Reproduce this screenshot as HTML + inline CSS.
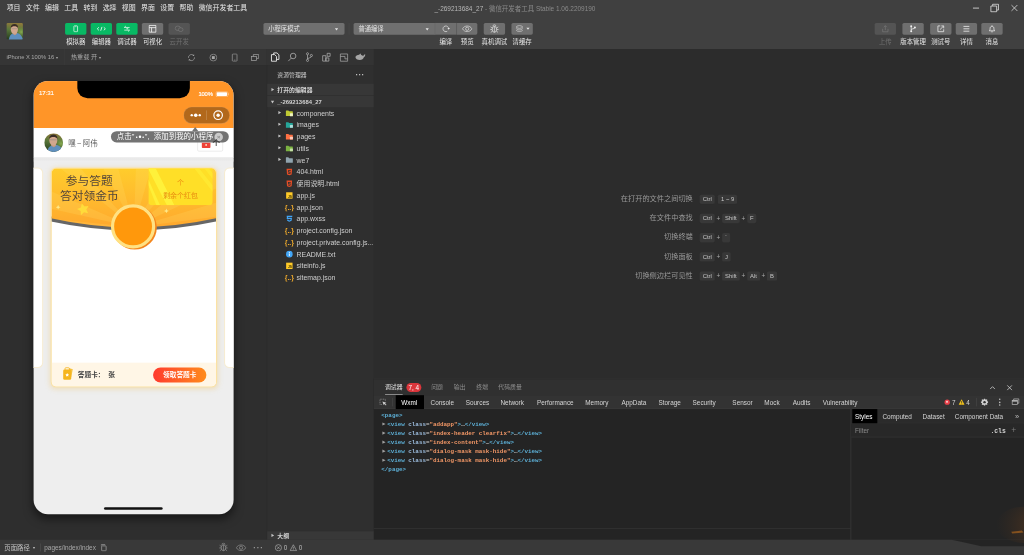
<!DOCTYPE html>
<html lang="zh-CN">
<head>
<meta charset="utf-8">
<title>微信开发者工具</title>
<style>
*{box-sizing:border-box;margin:0;padding:0}
html,body{width:1024px;height:555px;overflow:hidden;background:#2e2e2e}
body{font-family:"Liberation Sans","Noto Sans CJK SC",sans-serif;font-size:12px;color:#ccc}
#app{position:absolute;left:0;top:0;width:1920px;height:1041px;transform:scale(.533333);transform-origin:0 0;background:#2e2e2e;overflow:hidden}
.abs{position:absolute}
svg{display:block}
/* ---------- top bars ---------- */
#menubar{position:absolute;left:0;top:0;width:1920px;height:30px;background:#404040}
#menubar .mi{position:absolute;top:0;height:30px;line-height:29px;font-size:13px;color:#e8e8e8;white-space:nowrap}
#title{position:absolute;top:0;left:0;width:1920px;padding-left:11px;text-align:center;height:30px;line-height:33px;font-size:12.100px;color:#8a8a8a;white-space:nowrap}
#title b{font-weight:normal;color:#b8b8b8}
#toolbar{position:absolute;left:0;top:30px;width:1920px;height:62px;background:#404040}
.tb{position:absolute;top:13px;height:22px;width:40px;border-radius:3px;background:#6f6f6f}
.tb.g{background:#08b964}
.tb.d{background:#545454}
.tb svg{position:absolute;left:50%;top:50%;transform:translate(-50%,-50%)}
.tl{position:absolute;top:39.500px;height:18px;line-height:18px;font-size:12px;color:#e6e6e6;text-align:center;white-space:nowrap;transform:translateX(-50%)}
.tl.d{color:#6f6f6f}
.sel{position:absolute;top:13px;height:22px;border-radius:3px;background:#707070;color:#e2e2e2;font-size:11.800px;line-height:25px;padding-left:9px;white-space:nowrap;overflow:hidden}
.sel i{position:absolute;right:12px;top:9.500px;border:3.5px solid transparent;border-top:4.5px solid #e6e6e6;border-bottom:0}
/* ---------- sim toolbar ---------- */
#simbar{position:absolute;left:0;top:92px;width:500px;height:30px;background:#353535}
#simbar .t{position:absolute;top:0;height:30px;line-height:30px;font-size:11.5px;color:#a9a9a9;white-space:nowrap}
#expbar{position:absolute;left:500px;top:92px;width:201px;height:30px;background:#333}
#sim{position:absolute;left:0;top:122px;width:501px;height:890px;background:#2e2e2e}
#explorer{position:absolute;left:500px;top:122px;width:201px;height:890px;background:#2f2f2f;border-left:1px solid #2a2a2a}
#editor{position:absolute;left:701px;top:92px;width:1219px;height:618px;background:#2c2c2c}
#debug{position:absolute;left:701px;top:710px;width:1219px;height:302px;background:#242424}
#status{position:absolute;left:0;top:1012px;width:1920px;height:29px;background:#393939}

/* ---------- explorer ---------- */
#explorer .hd{position:absolute;left:0;top:0;width:200px;height:35px;line-height:38px;font-size:11px;color:#c8c8c8;padding-left:19px}
#explorer .sec{position:absolute;left:0;width:200px;height:22px;line-height:23.500px;font-size:11px;font-weight:bold;color:#d2d2d2;padding-left:19px;white-space:nowrap}
#explorer .row{position:absolute;left:0;width:200px;height:22px;line-height:24.500px;font-size:13px;color:#cfcfcf;padding-left:55px;white-space:nowrap;overflow:hidden}
#explorer .row svg{position:absolute;left:34px;top:3.500px;width:15px;height:15px}#explorer .row svg.j{width:19px;left:32px}
#explorer .tw{position:absolute;left:21px;top:7px;border:3.5px solid transparent;border-left:5px solid #c5c5c5;border-right:0}
#explorer .sec .tw{left:8px;top:7.5px}
#explorer .sec .tw.o{border:3.5px solid transparent;border-top:5px solid #c5c5c5;border-bottom:0;top:9px;left:6.5px}

/* ---------- editor watermark ---------- */
#editor .wl{position:absolute;right:621px;height:36px;line-height:36px;font-size:13.5px;color:#9a9a9a;white-space:nowrap;letter-spacing:0}
#editor .wk{position:absolute;left:609.500px;height:36px;line-height:36px;font-size:11px;color:#8c8c8c;white-space:nowrap}
#editor kbd{display:inline-block;font-family:inherit;font-size:11px;line-height:17px;height:18px;padding:0 5.600px;margin:0 1.500px;background:#383838;border-radius:3px;color:#c6c6c6;vertical-align:middle;border-bottom:1px solid #303030}
#editor .pl{display:inline-block;width:10.500px;text-align:center;color:#aaa;font-size:12px;vertical-align:middle}
/* ---------- debug ---------- */
#debug{border-top:1px solid #3a3a3a}
#dtop{position:absolute;left:0;top:0;width:1219px;height:30px;background:#303030}
#dtop .t{position:absolute;top:0;height:30px;line-height:31px;font-size:11px;color:#8e8e8e;white-space:nowrap}
#dtabs{position:absolute;left:0;top:30px;width:1219px;height:26px;background:#333;border-bottom:1px solid #3d3d3d}
#dtabs .t{position:absolute;top:0;height:25px;line-height:29px;font-size:12px;color:#d6d6d6;white-space:nowrap}
#wxml{position:absolute;left:0;top:56px;width:894px;font-family:"Liberation Mono",monospace;font-size:11px;line-height:17px;color:#5db0d7;white-space:pre;font-weight:bold}
#wxml div{height:17px;padding-left:25px;position:relative}
#wxml i{position:absolute;left:15.500px;top:4px;border:3.600px solid transparent;border-left:6px solid #a0a0a0;border-right:0}
#wxml .a{color:#9bbbdc}#wxml .v{color:#f29766}#wxml .e{color:#cfcfcf}
#styles{position:absolute;left:894px;top:56px;width:325px;height:245px;border-left:1px solid #444}
#styles .tabs{position:absolute;left:0;top:0;width:324px;height:27px;background:#2b2b2b;border-bottom:1px solid #3a3a3a}
#styles .tabs .t{position:absolute;top:0;height:26px;line-height:28.500px;font-size:12px;color:#d6d6d6;white-space:nowrap}
#styles .flt{position:absolute;left:0;top:27px;width:324px;height:26px;background:#282828;border-bottom:1px solid #3a3a3a}
/* ---------- status ---------- */
#status .t{position:absolute;top:0;height:29px;line-height:31px;font-size:12px;color:#a8a8a8;white-space:nowrap}

/* ---------- phone ---------- */
#phone{position:absolute;left:63px;top:30px;width:375px;height:812px;border-radius:27px;background:#eee;overflow:hidden;box-shadow:0 8px 18px rgba(0,0,0,.5);color:#333}
#phone .nav{position:absolute;left:0;top:0;width:375px;height:88px;background:#ff9528}
#phone .notch{position:absolute;left:82px;top:-2px;width:211px;height:34px;background:#000;border-radius:0 0 19px 19px}
#phone .hdr{position:absolute;left:0;top:88px;width:375px;height:56px;background:#fff;border-bottom:1px solid #e2e2e2}
#card{position:absolute;left:32px;top:162px;width:312px;height:412px;border-radius:10px;background:#fff;border:2px solid #fbe2a4;overflow:hidden;box-shadow:0 2px 10px rgba(240,190,80,.35)}
</style>
</head>
<body>
<div id="app">
<div id="menubar"><div class="mi" style="left:12.5px">项目</div><div class="mi" style="left:48.5px">文件</div><div class="mi" style="left:84.5px">编辑</div><div class="mi" style="left:120.5px">工具</div><div class="mi" style="left:156.5px">转到</div><div class="mi" style="left:192.5px">选择</div><div class="mi" style="left:228.5px">视图</div><div class="mi" style="left:264.5px">界面</div><div class="mi" style="left:300.5px">设置</div><div class="mi" style="left:336.5px">帮助</div><div class="mi" style="left:372.5px">微信开发者工具</div><svg class="abs" style="left:1824px;top:9px" width="12" height="12" viewBox="0 0 12 12"><path d="M0 6.200h12" stroke="#dcdcdc" stroke-width="1.600" fill="none"/></svg>
<svg class="abs" style="left:1856px;top:5.500px" width="18" height="18" viewBox="0 0 16 16"><path d="M1.7 4.700h9.600v9.600h-9.600z M4.600 4.400v-2.700h9.700v9.700h-2.700" stroke="#dcdcdc" stroke-width="1.400" fill="none"/></svg>
<svg class="abs" style="left:1895px;top:8px" width="14" height="14" viewBox="0 0 14 14"><path d="M1.500 1.500l11 11M12.500 1.500l-11 11" stroke="#dcdcdc" stroke-width="1.500" fill="none"/></svg></div>
<div id="title"><b>_-269213684_27</b> - 微信开发者工具 Stable 1.06.2209190</div>
<div id="toolbar"><svg class="abs" style="left:11.500px;top:12.500px;border-radius:2.500px" width="31" height="31" viewBox="0 0 31 31" preserveAspectRatio="none"><defs><linearGradient id="ta" x1=".2" y1="0" x2=".1" y2="1"><stop offset="0" stop-color="#8c7a3c"/><stop offset=".4" stop-color="#58763a"/><stop offset="1" stop-color="#263c1e"/></linearGradient><radialGradient id="tb" cx=".9" cy=".55" r=".35"><stop offset="0" stop-color="#86aa50"/><stop offset="1" stop-color="#66883c" stop-opacity="0"/></radialGradient><filter id="tf" x="-10%" y="-10%" width="120%" height="120%"><feGaussianBlur stdDeviation=".7"/></filter></defs><rect width="31" height="31" fill="url(#ta)"/><rect width="31" height="31" fill="url(#tb)"/><g filter="url(#tf)"><path d="M4.500 32C5.500 25 8 21.500 12 20l4 1.500 4.500-2.500c5 1.500 9 5 11 13z" fill="#5f8fbd"/><path d="M11.500 16h7l1.500 4-4 3-4.500-2.500z" fill="#c79c84"/><ellipse cx="15" cy="11.800" rx="6.600" ry="8.600" fill="#d2a78e"/><path d="M8.200 9.500C8 4.500 11 2 15.200 2s7 2.500 6.600 7.500C20.500 6.800 18 6 15 6S9.600 6.800 8.200 9.500z" fill="#3a2e26"/><path d="M9.500 10.800h11" stroke="#8a8a8a" stroke-width=".9"/></g></svg><div class="tb g" style="left:122px"><svg width="12" height="14" viewBox="0 0 14 16"><rect x="3" y="1.500" width="8" height="13" rx="1.500" fill="none" stroke="#fff" stroke-width="1.500"/><path d="M5.7 3.4h2.600" stroke="#fff" stroke-width="1"/></svg></div><div class="tl " style="left:142px">模拟器</div><div class="tb g" style="left:170px"><svg width="20" height="12" viewBox="0 0 20 12"><path d="M5.400 3.200L2.400 6l3 2.800M14.600 3.200L17.600 6l-3 2.800M11.200 2.400L8.800 9.600" fill="none" stroke="#fff" stroke-width="1.500"/></svg></div><div class="tl " style="left:190px">编辑器</div><div class="tb g" style="left:218px"><svg width="16" height="14" viewBox="0 0 16 14"><path d="M3 4.5h10M6 1.8L3 4.5M13 9.5H3M10 12.2l3-2.7" fill="none" stroke="#fff" stroke-width="1.3"/><rect x="7" y="6.2" width="3.4" height="1.6" fill="#fff"/></svg></div><div class="tl " style="left:238px">调试器</div><div class="tb " style="left:266px"><svg width="16" height="16" viewBox="0 0 16 16"><path d="M1.7 1.7h12.6v12.6H1.7zM1.7 5.8h12.6M6.2 5.8v8.5" fill="none" stroke="#fff" stroke-width="1.4"/></svg></div><div class="tl " style="left:286px">可视化</div><div class="tb d" style="left:316px"><svg width="20" height="14" viewBox="0 0 20 14"><ellipse cx="7.5" cy="6" rx="5" ry="4.2" fill="none" stroke="#7a7a7a" stroke-width="1.2"/><ellipse cx="12.8" cy="8.6" rx="4.4" ry="3.6" fill="#545454" stroke="#7a7a7a" stroke-width="1.2"/></svg></div><div class="tl d" style="left:336px">云开发</div><div class="sel" style="left:494px;width:152px">小程序模式<i></i></div><div class="abs" style="left:654px;top:13px;width:1px;height:22px;background:#4b4b4b"></div><div class="sel" style="left:663px;width:153px;border-radius:3px 0 0 3px">普通编译<i></i></div><div class="tb" style="left:815px;width:41px;border-radius:0;border-left:1px solid #666"><svg width="16" height="16" viewBox="0 0 16 16"><path d="M10.600 12.600A5.300 5.300 0 1 1 13.200 7.600" fill="none" stroke="#e8e8e8" stroke-width="1.300"/><path d="M11 6.400h4.600l-2.300 3.200z" fill="#e8e8e8"/></svg></div><div class="tl" style="left:836px">编译</div><div class="tb" style="left:856px;width:39px;border-radius:0 3px 3px 0;border-left:1px solid #666"><svg width="20" height="14" viewBox="0 0 20 14"><path d="M1.2 7C3.2 3.4 6.3 1.8 10 1.8S16.8 3.4 18.8 7C16.8 10.6 13.7 12.2 10 12.2S3.2 10.6 1.2 7z" fill="none" stroke="#e8e8e8" stroke-width="1.2"/><circle cx="10" cy="7" r="3" fill="none" stroke="#e8e8e8" stroke-width="1.2"/></svg></div><div class="tl" style="left:876px">预览</div><div class="tb " style="left:907px"><svg width="20" height="18" viewBox="0 0 20 18"><ellipse cx="10" cy="10" rx="4.2" ry="5.6" fill="none" stroke="#e8e8e8" stroke-width="1.3"/><path d="M10 4.4v11.2M7.2 4.2a2.8 2.8 0 0 1 5.6 0M5.8 7.6L2.8 5.4M14.2 7.6l3-2.2M5.8 10.4H2.2M14.2 10.4h3.6M6.2 13.4l-3 2.4M13.8 13.4l3 2.4" fill="none" stroke="#e8e8e8" stroke-width="1.2"/></svg></div><div class="tl " style="left:927px">真机调试</div><div class="tb" style="left:959px"><svg style="margin-left:-5px" width="16" height="14.500" viewBox="0 0 18 16"><ellipse cx="9" cy="4.2" rx="6.6" ry="2.8" fill="none" stroke="#e8e8e8" stroke-width="1.2"/><path d="M2.4 7.4c0 1.6 3 2.8 6.6 2.8s6.6-1.2 6.6-2.8M2.4 10.8c0 1.6 3 2.8 6.6 2.8s6.6-1.2 6.6-2.8" fill="none" stroke="#e8e8e8" stroke-width="1.2"/></svg><i style="position:absolute;right:6.500px;top:9px;border:3.500px solid transparent;border-top:4.5px solid #e6e6e6;border-bottom:0"></i></div><div class="tl" style="left:979px">清缓存</div><div class="tb d" style="left:1640px"><svg width="16" height="16" viewBox="0 0 16 16"><path d="M8 10.5V2.2M5 5l3-3 3 3M3 8v5.6h10V8" fill="none" stroke="#7a7a7a" stroke-width="1.2"/></svg></div><div class="tl d" style="left:1660px">上传</div><div class="tb " style="left:1692px"><svg width="16" height="16" viewBox="0 0 16 16"><path d="M4.5 4.6v7M4.5 10c0-2.6 6.6-1.4 6.6-4" fill="none" stroke="#f0f0f0" stroke-width="1.4"/><circle cx="4.5" cy="3.2" r="1.9" fill="#f0f0f0"/><circle cx="4.5" cy="12.8" r="1.9" fill="#f0f0f0"/><circle cx="11.4" cy="5.6" r="1.9" fill="#f0f0f0"/></svg></div><div class="tl " style="left:1712px">版本管理</div><div class="tb " style="left:1744px"><svg width="16" height="16" viewBox="0 0 16 16"><path d="M7 2.6H2.6v10.8h10.8V9" fill="none" stroke="#f0f0f0" stroke-width="1.4"/><path d="M6.6 9.4l6.2-6.2M9 2.6h4.4V7" fill="none" stroke="#f0f0f0" stroke-width="1.4"/></svg></div><div class="tl " style="left:1764px">测试号</div><div class="tb " style="left:1792px"><svg width="16" height="16" viewBox="0 0 16 16"><path d="M2.5 3.5h11M2.5 8h11M2.5 12.5h11" stroke="#f0f0f0" stroke-width="1.5"/></svg></div><div class="tl " style="left:1812px">详情</div><div class="tb " style="left:1840px"><svg width="16" height="16" viewBox="0 0 16 16"><path d="M3 11.8h10c-1.2-1-1.4-2-1.4-4.4 0-2.4-1.4-4-3.6-4s-3.6 1.6-3.6 4c0 2.4-.2 3.4-1.4 4.4z" fill="none" stroke="#f0f0f0" stroke-width="1.4" stroke-linejoin="round"/><path d="M6.6 13.6h2.8" stroke="#f0f0f0" stroke-width="1.4"/><path d="M8 1.6v1.6" stroke="#f0f0f0" stroke-width="1.4"/></svg></div><div class="tl " style="left:1860px">消息</div></div>
<div id="simbar"><div class="t" style="left:12px;font-size:10.800px">iPhone X 100% 16 <span style="font-size:8px;position:relative;top:-1px">▾</span></div><div class="abs" style="left:120px;top:0;width:1px;height:30px;background:#3c3c3c"></div><div class="t" style="left:133px">热重载 开 <span style="font-size:8px;position:relative;top:-1px">▾</span></div><svg class="abs" style="left:351px;top:8px" width="16" height="16" viewBox="0 0 16 16"><path d="M2.300 8.600A5.800 5.800 0 0 1 12 3.700M13.700 7.400A5.800 5.800 0 0 1 4 12.300" fill="none" stroke="#a8a8a8" stroke-width="1.200"/><path d="M13 1.600v3.200H9.800zM3 14.400v-3.200h3.200z" fill="#a8a8a8"/></svg><svg class="abs" style="left:392px;top:8px" width="16" height="16" viewBox="0 0 16 16"><circle cx="8" cy="8" r="6.4" fill="none" stroke="#a8a8a8" stroke-width="1.2"/><rect x="5.3" y="5.3" width="5.4" height="5.4" fill="#a8a8a8"/></svg><svg class="abs" style="left:432px;top:8px" width="16" height="16" viewBox="0 0 16 16"><rect x="3.6" y="1.2" width="8.8" height="13.6" rx="1.4" fill="none" stroke="#a8a8a8" stroke-width="1.2"/><path d="M6.6 12.6h2.8" stroke="#a8a8a8" stroke-width="1"/></svg><svg class="abs" style="left:470px;top:8px" width="16" height="16" viewBox="0 0 16 16"><path d="M5 6V2.300h10v7.200h-3.600" fill="none" stroke="#a8a8a8" stroke-width="1.300"/><rect x="1.200" y="6.200" width="10" height="7.400" fill="none" stroke="#a8a8a8" stroke-width="1.300"/></svg></div>
<div id="expbar"><svg class="abs" style="left:6px;top:5px" width="20" height="20" viewBox="0 0 20 20"><path d="M7.2 5.2V2.2h6.2l3.6 3.6v8.6h-4" fill="none" stroke="#fff" stroke-width="1.5"/><path d="M3 5.4h6l3.4 3.4v9H3z" fill="none" stroke="#fff" stroke-width="1.5"/></svg><svg class="abs" style="left:38px;top:5px" width="20" height="20" viewBox="0 0 20 20"><circle cx="11.6" cy="8" r="5.2" fill="none" stroke="#b8b8b8" stroke-width="1.4"/><path d="M8 12L2.6 17.6" stroke="#b8b8b8" stroke-width="1.4"/></svg><svg class="abs" style="left:70px;top:5px" width="20" height="20" viewBox="0 0 20 20"><circle cx="6.6" cy="3.8" r="2" fill="none" stroke="#b8b8b8" stroke-width="1.3"/><circle cx="6.6" cy="16.2" r="2" fill="none" stroke="#b8b8b8" stroke-width="1.3"/><circle cx="13.8" cy="7" r="2" fill="none" stroke="#b8b8b8" stroke-width="1.3"/><path d="M6.6 5.8v8.4M13.8 9c0 3-7.2 2-7.2 5" fill="none" stroke="#b8b8b8" stroke-width="1.3"/></svg><svg class="abs" style="left:102px;top:5px" width="20" height="20" viewBox="0 0 20 20"><path d="M3 7.4h6v10.2H3zM9 11.6h5.6v6H9zM11.4 3h5.6v5.6h-5.6z" fill="none" stroke="#b8b8b8" stroke-width="1.3"/></svg><svg class="abs" style="left:136px;top:6.500px" width="18" height="18" viewBox="0 0 18 18"><path d="M2.200 2.200h13.600v13.600H2.200zM2.200 6.800h8.600v4.600h5" fill="none" stroke="#a6a6a6" stroke-width="1.400"/></svg><svg class="abs" style="left:165px;top:6px" width="22" height="18" viewBox="0 0 22 18"><path d="M1.500 9.500C1.500 6.200 5 4.600 8.600 4.600c.3-1.300 1.300-2.200 2.500-2.400.1 1 .5 1.900 1.200 2.700 1.700.5 3 1.400 3.800 2.500.400-1.800 1.600-3.200 3.600-3.600.4 2.400-.5 4.400-2.500 5.600-.6 3-3.600 5-7.600 5-4.600 0-8.100-1.800-8.100-4.900z" fill="#a6a6a6"/></svg></div>
<div id="sim"><div id="phone"><div class="nav"></div><div class="notch"></div><div class="abs" style="left:10px;top:14px;font-size:11.500px;line-height:18px;color:#fff;letter-spacing:-.2px;-webkit-text-stroke:.2px #fff">17:31</div><div class="abs" style="left:309px;top:15px;font-size:11px;line-height:18px;color:#fff;letter-spacing:-.3px;-webkit-text-stroke:.3px #fff">100%</div><svg class="abs" style="left:341px;top:19px" width="27" height="11" viewBox="0 0 27 11"><rect x=".6" y=".6" width="22.800" height="9.800" rx="2.600" fill="none" stroke="#fff" stroke-opacity=".6" stroke-width="1"/><rect x="2.200" y="2.200" width="19.600" height="6.600" rx="1.400" fill="#fff"/><path d="M24.600 3.800c1.200.3 1.200 3.100 0 3.400z" fill="#fff" fill-opacity=".7"/></svg><div class="abs" style="left:281px;top:48px;width:87px;height:32px;border-radius:16px;background:rgba(0,0,0,.3);border:1px solid rgba(255,255,255,.18)"></div><div class="abs" style="left:324px;top:55px;width:1px;height:18px;background:rgba(255,255,255,.3)"></div><svg class="abs" style="left:293px;top:58px" width="22" height="12" viewBox="0 0 22 12"><circle cx="3.500" cy="6" r="2.200" fill="#fff"/><circle cx="11" cy="6" r="3.400" fill="#fff"/><circle cx="18.500" cy="6" r="2.200" fill="#fff"/></svg><svg class="abs" style="left:336px;top:54px" width="20" height="20" viewBox="0 0 20 20"><circle cx="10" cy="10" r="8" fill="none" stroke="#fff" stroke-width="2.200"/><circle cx="10" cy="10" r="3.200" fill="#fff"/></svg><div class="hdr"></div><svg class="abs" style="left:20px;top:98px;border-radius:18px" width="35" height="35" viewBox="0 0 31 31" preserveAspectRatio="none"><defs><linearGradient id="pa" x1=".2" y1="0" x2=".1" y2="1"><stop offset="0" stop-color="#8c7a3c"/><stop offset=".4" stop-color="#58763a"/><stop offset="1" stop-color="#263c1e"/></linearGradient><radialGradient id="pb" cx=".9" cy=".55" r=".35"><stop offset="0" stop-color="#86aa50"/><stop offset="1" stop-color="#66883c" stop-opacity="0"/></radialGradient><filter id="pf" x="-10%" y="-10%" width="120%" height="120%"><feGaussianBlur stdDeviation=".7"/></filter></defs><rect width="31" height="31" fill="url(#pa)"/><rect width="31" height="31" fill="url(#pb)"/><g filter="url(#pf)"><path d="M4.500 32C5.500 25 8 21.500 12 20l4 1.500 4.500-2.500c5 1.500 9 5 11 13z" fill="#5f8fbd"/><path d="M11.500 16h7l1.500 4-4 3-4.500-2.500z" fill="#c79c84"/><ellipse cx="15" cy="11.800" rx="6.600" ry="8.600" fill="#d2a78e"/><path d="M8.200 9.500C8 4.500 11 2 15.200 2s7 2.500 6.600 7.500C20.500 6.800 18 6 15 6S9.600 6.800 8.200 9.500z" fill="#3a2e26"/><path d="M9.500 10.800h11" stroke="#8a8a8a" stroke-width=".9"/></g></svg><div class="abs" style="left:65px;top:106px;font-size:14px;line-height:20px;color:#555">嘿<span style="margin:0 2.500px">~</span>阿伟</div><div class="abs" style="left:307px;top:96px;width:48px;height:36px;border:1px solid #ddd;border-radius:3px;background:#fff"></div><div class="abs" style="left:297px;top:86px;border:6px solid transparent;border-bottom:8px solid #757575;border-top:0"></div><div class="abs" style="left:145px;top:94px;width:221px;height:20.500px;border-radius:10.500px;background:#737373;color:#fff;font-size:14px;line-height:20.500px;padding-left:11px;white-space:nowrap">点击"<span style="font-size:10px;letter-spacing:1.500px;vertical-align:1px;margin:0 0 0 2.500px">•<span style="font-size:16px;vertical-align:-2.200px">•</span>•</span>",&nbsp; 添加到我的小程序</div><div class="abs" style="left:339px;top:97px;width:16px;height:16px;border-radius:8px;background:#c9c9c9;color:#8a8a8a;font-size:11px;line-height:16px;text-align:center;font-weight:bold">×</div><div class="abs" style="left:0;top:145px;width:375px;height:6px;background:linear-gradient(#e6e6e6,#eee)"></div><svg class="abs" style="left:314.500px;top:114.500px" width="17" height="11" viewBox="0 0 17 11"><path d="M0 0h17v8.500a2 2 0 0 1-2 2H2a2 2 0 0 1-2-2z" fill="#ee4238"/><circle cx="8.500" cy="4.800" r="1.700" fill="#ffe9c8"/></svg><div class="abs" style="left:335.500px;top:107px;font-size:14px;line-height:18px;color:#333;-webkit-text-stroke:.3px #333">个</div><div class="abs" style="left:-20px;top:162px;width:38px;height:376px;border-radius:10px;background:#fff;border:2px solid #f6ecd2"></div><div class="abs" style="left:357px;top:162px;width:38px;height:376px;border-radius:10px;background:#fff;border:2px solid #f6ecd2"></div><div id="card"><svg class="abs" style="left:-2px;top:-2px" width="312" height="130" viewBox="0 0 312 130">
<defs>
<linearGradient id="cg" x1="0" y1="0" x2="0" y2="1"><stop offset="0" stop-color="#ffcd2c"/><stop offset=".5" stop-color="#ffb82e"/><stop offset="1" stop-color="#ffa22e"/></linearGradient>
<radialGradient id="rg" cx=".5" cy="1" r=".9"><stop offset="0" stop-color="#fff" stop-opacity=".0"/><stop offset="1" stop-color="#fff" stop-opacity="0"/></radialGradient>
<clipPath id="cc"><path d="M0 0H312V95Q156 130 0 95z"/></clipPath>
</defs>
<path d="M0 101Q156 135 312 101V92H0z" fill="#666"/>
<g clip-path="url(#cc)">
<rect width="312" height="130" fill="url(#cg)"/>
<g fill="#ffe070" fill-opacity=".2">
<path d="M156 112L-10 40V75z"/><path d="M156 112L10 -5H50z"/><path d="M156 112L95 -5H125z"/><path d="M156 112L160 -5H190z"/><path d="M156 112L225 -5H262z"/><path d="M156 112L300 -5L330 30z"/><path d="M156 112L330 60V90z"/><path d="M156 112L-10 95V112z"/>
</g>
</g>
<path d="M0 -11l3.400 7 7.700 1-5.600 5.300 1.400 7.700L0 6.300l-6.900 3.700 1.400-7.700L-11.100 -3l7.700-1z" fill="#ffdc3a" transform="translate(61 78) rotate(-14)"/>
<path d="M14 70l1.300 3.200 3.200 1.300-3.200 1.300L14 79l-1.300-3.200-3.200-1.300 3.200-1.300z" fill="#ffe98a"/>
<path d="M217 77l1.300 3.200 3.200 1.300-3.200 1.300L217 86l-1.300-3.200-3.200-1.300 3.200-1.300z" fill="#ffe98a"/>
</svg><div class="abs" style="left:0;top:8px;width:141px;text-align:center;font-size:22px;line-height:30px;color:#54463a;letter-spacing:0">参与答题</div><div class="abs" style="left:0;top:37px;width:141px;text-align:center;font-size:22px;line-height:30px;color:#54463a;white-space:nowrap;padding-left:0">答对领金币</div><svg class="abs" style="left:181px;top:-2px" width="121" height="73" viewBox="0 0 121 73"><defs><clipPath id="tk"><path d="M0 0H121V64a7 7 0 0 1-7 7H7a7 7 0 0 1-7-7z"/></clipPath></defs><g clip-path="url(#tk)"><rect width="121" height="73" fill="#ffdf27"/><path d="M0 0H13L50 73H36L0 3z" fill="#fff53e" fill-opacity=".85"/><path d="M0 22V33L16 73H23z" fill="#fff53e" fill-opacity=".7"/><path d="M85 0H94L121 34V46z" fill="#fff23a" fill-opacity=".5"/><path d="M104 0H112L121 11V22z" fill="#fff23a" fill-opacity=".4"/></g></svg><div class="abs" style="left:181px;top:17px;width:121px;text-align:center;font-size:13px;line-height:18px;color:#ee8f12">个</div><div class="abs" style="left:181px;top:42px;width:121px;text-align:center;font-size:13px;line-height:18px;color:#e88a10">剩余个红包</div><div class="abs" style="left:113.500px;top:69px;width:83px;height:83px;border-radius:42px;background:#f4861c"></div><div class="abs" style="left:111px;top:66.500px;width:83px;height:83px;border-radius:42px;background:#ff980c;border:6px solid #ffe183"></div><div class="abs" style="left:0;top:364px;width:312px;height:46px;background:#fff6e6"></div><svg class="abs" style="left:20px;top:372px" width="22" height="26" viewBox="0 0 22 26"><path d="M12 2l7.500 2.500-3 16z" fill="#f6c443"/><rect x="1.500" y="5" width="15" height="19" rx="2.500" fill="#f5b51e"/><rect x="5" y="1.500" width="8" height="5" rx="1.500" fill="none" stroke="#f5b51e" stroke-width="1.500"/><path d="M9 11.500l1.200 2 2.200.5-1.500 1.700.2 2.300-2.100-.9-2.100.9.200-2.300-1.500-1.700 2.200-.5z" fill="#fff"/></svg><div class="abs" style="left:49px;top:377px;font-size:12.500px;line-height:20px;color:#444;font-weight:bold;white-space:pre">答题卡：  张</div><div class="abs" style="left:190px;top:373px;width:100px;height:28px;border-radius:14px;background:linear-gradient(90deg,#ff3a2e,#ff8c1c);color:#fff;font-size:12.500px;font-weight:bold;line-height:28px;text-align:center">领取答题卡</div></div><div class="abs" style="left:132px;top:799px;width:110px;height:5px;border-radius:3px;background:#111"></div></div></div>
<div id="explorer"><div class="hd">资源管理器<span style="position:absolute;left:165.500px;top:-2.300px;font-size:15px;font-weight:bold;letter-spacing:.6px;color:#c4c4c4">···</span></div><div class="sec" style="top:35px;background:#373737"><i class="tw"></i>打开的编辑器</div><div class="sec" style="top:57px;background:#373737;border-top:1px solid #2d2d2d"><i class="tw o"></i>_-269213684_27</div><div class="row" style="top:79px"><i class="tw"></i><svg width="16" height="16" viewBox="0 0 16 16"><path d="M1 3.200a1 1 0 0 1 1-1h4l1.600 1.600H14a1 1 0 0 1 1 1v7.400a1 1 0 0 1-1 1H2a1 1 0 0 1-1-1z" fill="#c0ca33"/><rect x="9.200" y="8" width="6" height="5.600" rx="1" fill="#f0f4c3"/></svg>components</div><div class="row" style="top:101px"><i class="tw"></i><svg width="16" height="16" viewBox="0 0 16 16"><path d="M1 3.200a1 1 0 0 1 1-1h4l1.600 1.600H14a1 1 0 0 1 1 1v7.400a1 1 0 0 1-1 1H2a1 1 0 0 1-1-1z" fill="#26a69a"/><rect x="9.200" y="8" width="6" height="5.600" rx="1" fill="#b2dfdb"/></svg>images</div><div class="row" style="top:123px"><i class="tw"></i><svg width="16" height="16" viewBox="0 0 16 16"><path d="M1 3.200a1 1 0 0 1 1-1h4l1.600 1.600H14a1 1 0 0 1 1 1v7.400a1 1 0 0 1-1 1H2a1 1 0 0 1-1-1z" fill="#ff7043"/><rect x="9.200" y="8" width="6" height="5.600" rx="1" fill="#ffccbc"/></svg>pages</div><div class="row" style="top:145px"><i class="tw"></i><svg width="16" height="16" viewBox="0 0 16 16"><path d="M1 3.200a1 1 0 0 1 1-1h4l1.600 1.600H14a1 1 0 0 1 1 1v7.400a1 1 0 0 1-1 1H2a1 1 0 0 1-1-1z" fill="#7cb342"/><rect x="9.200" y="8" width="6" height="5.600" rx="1" fill="#c5e1a5"/></svg>utils</div><div class="row" style="top:167px"><i class="tw"></i><svg width="16" height="16" viewBox="0 0 16 16"><path d="M1 3.200a1 1 0 0 1 1-1h4l1.600 1.600H14a1 1 0 0 1 1 1v7.400a1 1 0 0 1-1 1H2a1 1 0 0 1-1-1z" fill="#90a4ae"/></svg>we7</div><div class="row" style="top:189px"><svg width="16" height="16" viewBox="0 0 16 16"><path d="M2.400 1.600h11.200l-1 11.400L8 14.600 3.400 13z" fill="#e44d26"/><path d="M5.200 4.400h5.800l-.2 1.600H6.800l.1 1.500h3.700l-.4 4L8 12.100l-2.200-.6-.1-1.700h1.500l.1.700.7.200.8-.2.1-1.400H5.600z" fill="#2e2e2e"/></svg>404.html</div><div class="row" style="top:211px"><svg width="16" height="16" viewBox="0 0 16 16"><path d="M2.400 1.600h11.200l-1 11.400L8 14.600 3.400 13z" fill="#e44d26"/><path d="M5.200 4.400h5.800l-.2 1.600H6.800l.1 1.500h3.700l-.4 4L8 12.100l-2.200-.6-.1-1.700h1.500l.1.700.7.200.8-.2.1-1.400H5.600z" fill="#2e2e2e"/></svg>使用说明.html</div><div class="row" style="top:233px"><svg width="16" height="16" viewBox="0 0 16 16"><rect x="1.600" y="1.600" width="12.800" height="12.800" fill="#ffca28"/><text x="13.400" y="13.200" font-family="Liberation Sans,sans-serif" font-size="6.500" font-weight="bold" text-anchor="end" fill="#3a3000">JS</text></svg>app.js</div><div class="row" style="top:255px"><svg class="j" width="20" height="16" viewBox="0 0 20 16"><text x="10" y="12.800" font-family="Liberation Sans,sans-serif" font-size="14" font-weight="bold" text-anchor="middle" fill="#f2ac2c">{..}</text></svg>app.json</div><div class="row" style="top:277px"><svg width="16" height="16" viewBox="0 0 16 16"><path d="M2.600 1.800h11.600l-.5 2.400H5.600l-.3 1.600h8.100l-.9 5.800-4.700 1.800-4.200-1.800.3-2.400h2.200l-.1 1 2 .8 2.300-.8.3-2H2.600l.5-2.400z" fill="#42a5f5"/></svg>app.wxss</div><div class="row" style="top:299px"><svg class="j" width="20" height="16" viewBox="0 0 20 16"><text x="10" y="12.800" font-family="Liberation Sans,sans-serif" font-size="14" font-weight="bold" text-anchor="middle" fill="#f2ac2c">{..}</text></svg>project.config.json</div><div class="row" style="top:321px"><svg class="j" width="20" height="16" viewBox="0 0 20 16"><text x="10" y="12.800" font-family="Liberation Sans,sans-serif" font-size="14" font-weight="bold" text-anchor="middle" fill="#f2ac2c">{..}</text></svg>project.private.config.js...</div><div class="row" style="top:343px"><svg width="16" height="16" viewBox="0 0 16 16"><circle cx="8" cy="8" r="6.600" fill="#42a5f5"/><rect x="7.100" y="7" width="1.800" height="4.600" fill="#fff"/><circle cx="8" cy="4.900" r="1.100" fill="#fff"/></svg>README.txt</div><div class="row" style="top:365px"><svg width="16" height="16" viewBox="0 0 16 16"><rect x="1.600" y="1.600" width="12.800" height="12.800" fill="#ffca28"/><text x="13.400" y="13.200" font-family="Liberation Sans,sans-serif" font-size="6.500" font-weight="bold" text-anchor="end" fill="#3a3000">JS</text></svg>siteinfo.js</div><div class="row" style="top:387px"><svg class="j" width="20" height="16" viewBox="0 0 20 16"><text x="10" y="12.800" font-family="Liberation Sans,sans-serif" font-size="14" font-weight="bold" text-anchor="middle" fill="#f2ac2c">{..}</text></svg>sitemap.json</div><div class="sec" style="top:873px;height:17px;line-height:19px;background:#383838;border-top:1px solid #2a2a2a"><i class="tw" style="top:4.500px"></i>大纲</div></div>
<div id="editor"><div class="wl" style="top:263px">在打开的文件之间切换</div><div class="wk" style="top:263px"><kbd>Ctrl</kbd> <kbd>1 ~ 9</kbd></div><div class="wl" style="top:299px">在文件中查找</div><div class="wk" style="top:299px"><kbd>Ctrl</kbd><span class="pl">+</span><kbd>Shift</kbd><span class="pl">+</span><kbd>F</kbd></div><div class="wl" style="top:335px">切换终端</div><div class="wk" style="top:335px"><kbd>Ctrl</kbd><span class="pl">+</span><kbd>`</kbd></div><div class="wl" style="top:371px">切换面板</div><div class="wk" style="top:371px"><kbd>Ctrl</kbd><span class="pl">+</span><kbd>J</kbd></div><div class="wl" style="top:407px">切换侧边栏可见性</div><div class="wk" style="top:407px"><kbd>Ctrl</kbd><span class="pl">+</span><kbd>Shift</kbd><span class="pl">+</span><kbd>Alt</kbd><span class="pl">+</span><kbd>B</kbd></div></div>
<div id="debug"><div id="dtop"><div class="t" style="left:20.9px;color:#e4e4e4">调试器</div><div class="abs" style="left:20.9px;top:27.500px;width:33px;height:1.500px;background:#d8d8d8"></div><div class="abs" style="left:61.0px;top:6.500px;width:27.500px;height:17.500px;border-radius:9px;background:#dc363c;color:#fff;font-size:12px;line-height:18px;text-align:center">7, 4</div><div class="t" style="left:107.5px">问题</div><div class="t" style="left:149.9px">输出</div><div class="t" style="left:192.1px">终端</div><div class="t" style="left:233.3px">代码质量</div><svg class="abs" style="left:1154.3px;top:11px" width="12" height="10" viewBox="0 0 12 10"><path d="M1.500 7.500L6 3l4.500 4.500" fill="none" stroke="#d0d0d0" stroke-width="1.500"/></svg><svg class="abs" style="left:1186.0px;top:10px" width="12" height="12" viewBox="0 0 12 12"><path d="M1.500 1.500l9 9M10.500 1.500l-9 9" fill="none" stroke="#d0d0d0" stroke-width="1.500"/></svg></div><div id="dtabs"><svg class="abs" style="left:8.899999999999999px;top:5px" width="16" height="16" viewBox="0 0 16 16"><path d="M6 12.500H2.500v-10h10V6" fill="none" stroke="#9a9a9a" stroke-width="1.300" stroke-dasharray="2 1.200"/><path d="M7 7l2.600 7 1.300-2.600 2.700 2.700 1-1-2.700-2.700L14.500 9.100z" fill="#cfcfcf"/></svg><div class="abs" style="left:34.0px;top:5px;width:1px;height:16px;background:#4a4a4a"></div><div class="abs" style="left:41.1px;top:0;width:53.1px;height:26px;background:#000"></div><div class="t" style="left:51.4px;color:#fff">Wxml</div><div class="t" style="left:106.4px">Console</div><div class="t" style="left:172.2px">Sources</div><div class="t" style="left:237.4px">Network</div><div class="t" style="left:305.9px">Performance</div><div class="t" style="left:396.4px">Memory</div><div class="t" style="left:464.1px">AppData</div><div class="t" style="left:533.5px">Storage</div><div class="t" style="left:597.6px">Security</div><div class="t" style="left:672.2px">Sensor</div><div class="t" style="left:732.2px">Mock</div><div class="t" style="left:785.3px">Audits</div><div class="t" style="left:841.6px">Vulnerability</div><div class="abs" style="left:1069.6px;top:8px;width:10px;height:10px;border-radius:5px;background:#e8414a;color:#fff;font-size:8px;line-height:10px;text-align:center;font-weight:bold">×</div><div class="t" style="left:1083.8px">7</div><svg class="abs" style="left:1095.6px;top:7px" width="12" height="12" viewBox="0 0 12 12"><path d="M6 .8L11.600 10.800H.4z" fill="#f2c21a"/><path d="M6 4v3.600M6 8.600v1.200" stroke="#333" stroke-width="1.300"/></svg><div class="t" style="left:1110.8px">4</div><div class="abs" style="left:1129.0px;top:5px;width:1px;height:16px;background:#4a4a4a"></div><svg class="abs" style="left:1137.9px;top:6px" width="14" height="14" viewBox="0 0 14 14"><path d="M7 0l1 .1.400 1.700 1.100.5 1.500-.9 1.500 1.500-.9 1.500.5 1.100 1.700.4L14 7l-.1 1-1.700.4-.5 1.100.9 1.500-1.500 1.500-1.500-.9-1.100.5-.4 1.700L7 14l-1-.1-.4-1.700-1.100-.5-1.500.9-1.500-1.500.9-1.500-.5-1.100-1.700-.4L0 7l.1-1 1.700-.4.500-1.100-.9-1.500 1.500-1.500 1.500.9 1.100-.5L6 .1z" fill="#cfcfcf"/><circle cx="7" cy="7" r="2.300" fill="#333"/></svg><div class="abs" style="left:1172.1px;top:6px;width:3px;height:14px"><i style="display:block;width:3px;height:3px;border-radius:2px;background:#bdbdbd;margin-bottom:2.500px"></i><i style="display:block;width:3px;height:3px;border-radius:2px;background:#bdbdbd;margin-bottom:2.500px"></i><i style="display:block;width:3px;height:3px;border-radius:2px;background:#bdbdbd"></i></div><svg class="abs" style="left:1194.5px;top:5px" width="16" height="16" viewBox="0 0 16 16"><path d="M4.600 4V2h9.800v8h-2.600" fill="none" stroke="#bdbdbd" stroke-width="1.300"/><rect x="1.800" y="4.600" width="9.800" height="8" fill="none" stroke="#bdbdbd" stroke-width="1.300"/><rect x="1.800" y="4.600" width="9.800" height="2.400" fill="#bdbdbd"/></svg></div><div id="wxml"><div style="padding-left:14px;margin-top:4px">&lt;page&gt;</div><div><i></i>&lt;view <span class="a">class</span><span class="e">=</span><span class="v">"addapp"</span>&gt;<span class="e">…</span>&lt;/view&gt;</div><div><i></i>&lt;view <span class="a">class</span><span class="e">=</span><span class="v">"index-header clearfix"</span>&gt;<span class="e">…</span>&lt;/view&gt;</div><div><i></i>&lt;view <span class="a">class</span><span class="e">=</span><span class="v">"index-content"</span>&gt;<span class="e">…</span>&lt;/view&gt;</div><div><i></i>&lt;view <span class="a">class</span><span class="e">=</span><span class="v">"dialog-mask mask-hide"</span>&gt;<span class="e">…</span>&lt;/view&gt;</div><div><i></i>&lt;view <span class="a">class</span><span class="e">=</span><span class="v">"dialog-mask mask-hide"</span>&gt;<span class="e">…</span>&lt;/view&gt;</div><div style="padding-left:14px">&lt;/page&gt;</div></div><div class="abs" style="left:0;top:279px;width:894px;height:1px;background:#3a3a3a"></div><div id="styles"><div class="tabs"><div class="abs" style="left:2px;top:0;width:47px;height:27px;background:#000"></div><div class="t" style="left:7.1px;color:#fff">Styles</div><div class="t" style="left:58.5px">Computed</div><div class="t" style="left:133.9px">Dataset</div><div class="t" style="left:194.2px">Component Data</div><div class="t" style="left:307px;font-size:14px;top:-1px;color:#bdbdbd">»</div></div><div class="flt"><div class="abs" style="left:7px;top:0;line-height:27px;font-size:12px;color:#8a8a8a">Filter</div><div class="abs" style="left:261px;top:0;line-height:28px;font-family:'Liberation Mono',monospace;font-size:12px;font-weight:bold;color:#d0d0d0">.cls</div><div class="abs" style="left:300px;top:0;line-height:24px;font-size:16px;color:#7a7a7a">+</div></div></div></div>
<div id="status"><div class="t" style="left:8px;color:#c4c4c4">页面路径 <span style="font-size:8px;position:relative;top:-1px;margin-left:3px">▾</span></div><div class="abs" style="left:75px;top:7px;width:1px;height:15px;background:#555"></div><div class="t" style="left:83px">pages/index/index</div><svg class="abs" style="left:187px;top:8px" width="14" height="14" viewBox="0 0 14 14"><path d="M3 3V1.200h7.200" fill="none" stroke="#b0b0b0" stroke-width="1.200"/><rect x="3.600" y="3.600" width="8.400" height="9.200" rx="1" fill="none" stroke="#b0b0b0" stroke-width="1.200"/></svg><svg class="abs" style="left:409px;top:5px" width="20" height="18" viewBox="0 0 20 18"><ellipse cx="10" cy="10" rx="4.200" ry="5.600" fill="none" stroke="#9c9c9c" stroke-width="1.300"/><path d="M10 4.400v11.200M7.200 4.200a2.800 2.800 0 0 1 5.600 0M5.800 7.600L2.800 5.400M14.200 7.600l3-2.200M5.800 10.400H2.200M14.200 10.400h3.600M6.200 13.400l-3 2.400M13.800 13.400l3 2.400" fill="none" stroke="#9c9c9c" stroke-width="1.200"/></svg><svg class="abs" style="left:442px;top:8px" width="20" height="14" viewBox="0 0 20 14"><path d="M1.200 7C3.200 3.400 6.300 1.800 10 1.800S16.800 3.400 18.800 7C16.800 10.600 13.700 12.200 10 12.200S3.200 10.600 1.200 7z" fill="none" stroke="#9c9c9c" stroke-width="1.200"/><circle cx="10" cy="7" r="3" fill="none" stroke="#9c9c9c" stroke-width="1.200"/></svg><div class="t" style="left:475px;font-size:15px;letter-spacing:1.500px;top:-1.500px;font-weight:bold;color:#9c9c9c">···</div><svg class="abs" style="left:515px;top:8px" width="14" height="14" viewBox="0 0 14 14"><circle cx="7" cy="7" r="5.800" fill="none" stroke="#bdbdbd" stroke-width="1.100"/><path d="M4.800 4.800l4.400 4.400M9.200 4.800l-4.400 4.400" stroke="#bdbdbd" stroke-width="1.100"/></svg><div class="t" style="left:532px;color:#bdbdbd">0</div><svg class="abs" style="left:543px;top:8px" width="14" height="14" viewBox="0 0 14 14"><path d="M7 1.400L13 12.400H1z" fill="none" stroke="#bdbdbd" stroke-width="1.100" stroke-linejoin="round"/><path d="M7 5.400v3.600M7 10v1.200" stroke="#bdbdbd" stroke-width="1.100"/></svg><div class="t" style="left:560px;color:#bdbdbd">0</div></div>
<svg class="abs" style="left:1700px;top:900px;pointer-events:none" width="220" height="141" viewBox="0 0 220 141"><defs><radialGradient id="og" cx="1" cy=".5" r="1"><stop offset="0" stop-color="#c46a1c" stop-opacity=".5"/><stop offset=".5" stop-color="#8a4a18" stop-opacity=".22"/><stop offset="1" stop-color="#6a3a14" stop-opacity="0"/></radialGradient></defs><path d="M84 112L102 116 140 124H220V112z" fill="#242424"/><ellipse cx="220" cy="84" rx="52" ry="34" fill="url(#og)"/><path d="M196 97l20-2.500 3 4-21 2z" fill="#c9721c" fill-opacity=".55"/><rect x="-150" y="72.500" width="9" height="2" fill="#3a8aa0" fill-opacity=".7"/></svg>
</div>
</body>
</html>
